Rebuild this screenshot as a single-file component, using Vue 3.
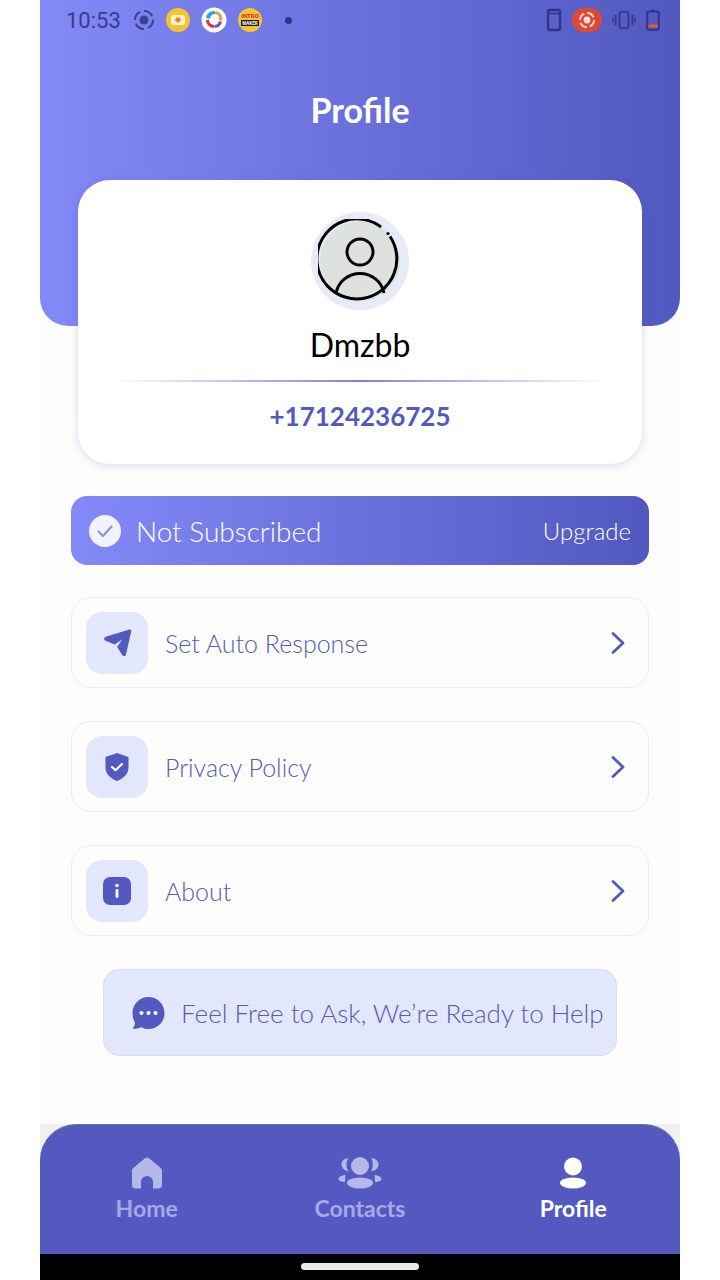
<template>
  <div class="phone">
    <header class="hero">
      <div class="status-bar">
        <span class="clock">10:53</span>
        <svg class="st-icon" width="22" height="22" viewBox="0 0 22 22">
          <circle cx="11" cy="11" r="9" fill="none" stroke="#3a4190" stroke-width="2" stroke-dasharray="10 4" />
          <circle cx="11" cy="11" r="4.5" fill="#3a4190" />
        </svg>
        <svg class="st-icon" width="26" height="26" viewBox="0 0 26 26">
          <circle cx="13" cy="13" r="12" fill="#f6c52d" />
          <rect x="6" y="8" width="14" height="10" rx="2" fill="#fff4d0" />
          <path d="M11 10.5h4v2h2l-4 3.5-4-3.5h2z" fill="#e8862a" />
        </svg>
        <svg class="st-icon" width="26" height="26" viewBox="0 0 26 26">
          <circle cx="13" cy="13" r="12.5" fill="#fff" />
          <path d="M5 11a8 8 0 0 1 9-7l1 3a5 5 0 0 0-6 5z" fill="#2fa3d6" />
          <path d="M15 4a8 8 0 0 1 6 10l-3-1a5 5 0 0 0-3-6z" fill="#f09a36" />
          <path d="M21 15a8 8 0 0 1-7 6l-1-3a5 5 0 0 0 5-4z" fill="#7a55b8" />
          <path d="M5 13a8 8 0 0 0 8 8l0-3a5 5 0 0 1-5-5z" fill="#d8304f" />
        </svg>
        <svg class="st-icon" width="26" height="26" viewBox="0 0 26 26">
          <circle cx="13" cy="13" r="12" fill="#f6c52d" />
          <text x="13" y="11" text-anchor="middle" class="intro-top">INTRO</text>
          <rect x="4" y="13" width="18" height="6" fill="#1a1a1a" />
          <text x="13" y="18" text-anchor="middle" class="intro-bottom">MAKER</text>
        </svg>
        <span class="st-dot"></span>
        <span class="st-spacer"></span>
        <svg class="st-icon" width="16" height="24" viewBox="0 0 16 24">
          <rect x="2" y="2" width="12" height="20" rx="1.5" fill="none" stroke="#2f3685" stroke-width="2.4" />
          <path d="M2 5.5h12" stroke="#2f3685" stroke-width="1.6" />
        </svg>
        <svg class="st-icon" width="30" height="24" viewBox="0 0 30 24">
          <rect x="0" y="0" width="30" height="24" rx="12" fill="#e4472f" />
          <circle cx="15" cy="12" r="3.4" fill="#fbe4de" />
          <circle cx="15" cy="12" r="7" fill="none" stroke="#fbe4de" stroke-width="1.8" stroke-dasharray="8 3" />
        </svg>
        <svg class="st-icon" width="24" height="22" viewBox="0 0 24 22">
          <rect x="7.5" y="3" width="9" height="16" rx="1.5" fill="none" stroke="#363d8c" stroke-width="2" />
          <path d="M3.5 6v10M20.5 6v10" stroke="#363d8c" stroke-width="2" />
          <path d="M0.8 8.5v5M23.2 8.5v5" stroke="#363d8c" stroke-width="1.6" />
        </svg>
        <svg class="st-icon" width="14" height="22" viewBox="0 0 14 22">
          <path d="M5 0.5h4v2H5z" fill="#2f3685" />
          <rect x="1.2" y="2.6" width="11.6" height="18.2" rx="1.5" fill="none" stroke="#2f3685" stroke-width="2" />
          <rect x="2.4" y="15.5" width="9.2" height="3" fill="#e4572f" />
        </svg>
      </div>
      <h1 class="title">Profile</h1>
    </header>

    <main class="content">
      <section class="card">
        <div class="avatar">
          <svg width="84" height="84" viewBox="0 0 84 84">
            <circle cx="42" cy="42" r="40" fill="#dde2dd" />
            <path d="M72 17.5A40 40 0 1 1 63 8" fill="none" stroke="#000" stroke-width="3" />
            <circle cx="70" cy="14.5" r="1.6" fill="#000" />
            <circle cx="42" cy="33" r="13" fill="none" stroke="#000" stroke-width="3" />
            <path d="M18 74a24.500 24.500 0 0 1 48 0" fill="none" stroke="#000" stroke-width="3" />
          </svg>
        </div>
        <div class="name">Dmzbb</div>
        <div class="divider"></div>
        <div class="phone-no">+17124236725</div>
      </section>

      <section class="sub-banner">
        <span class="check">
          <svg width="18" height="14" viewBox="0 0 18 14">
            <path d="M2.500 7.500l4.500 4.500 8.500-9.500" fill="none" stroke="#8f94d8" stroke-width="2.200" stroke-linecap="round" stroke-linejoin="round" />
          </svg>
        </span>
        <span class="sub-label">Not Subscribed</span>
        <span class="upgrade">Upgrade</span>
      </section>

      <div class="menu">
        <div v-for="item in menuItems" :key="item.label" class="menu-row">
          <span class="tile">
            <svg width="30" height="30" viewBox="0 0 30 30">
              <template v-if="item.icon === 'send'">
                <path d="M27.500 1.500c1.200-.3 2 .5 1.700 1.700L24 26.500c-.4 1.700-2.600 2.100-3.600.7l-5.300-8.200 5-7.400-7.400 5L3 12.500C1.500 11.500 2 9.300 3.700 8.800z" fill="#5359c1" />
              </template>
              <template v-else-if="item.icon === 'shield'">
                <path d="M15 1l11.500 4v10.500c0 6.500-5 11-11.500 13.500C8.500 26.500 3.500 22 3.500 15.500V5z" fill="#5359c1" />
                <path d="M10 15l3.500 3.200L20 12" fill="none" stroke="#fff" stroke-width="2.200" stroke-linecap="round" stroke-linejoin="round" />
              </template>
              <template v-else>
                <rect x="1" y="1" width="28" height="28" rx="7" fill="#5359c1" />
                <circle cx="15" cy="9.500" r="1.700" fill="#fff" />
                <rect x="13.600" y="13" width="2.800" height="9" rx="1.400" fill="#fff" />
              </template>
            </svg>
          </span>
          <span class="menu-label">{{ item.label }}</span>
          <svg class="chevron" width="16" height="24" viewBox="0 0 16 24">
            <path d="M3 2.500L13 12 3 21.500" fill="none" stroke="#5359c1" stroke-width="2.800" stroke-linecap="round" stroke-linejoin="round" />
          </svg>
        </div>
      </div>

      <div class="help-box">
        <svg width="34" height="34" viewBox="0 0 34 34">
          <path d="M17.500 1C26.500 1 33.500 8 33.500 17S26.500 33 17.500 33c-2.800 0-5.200-.7-7.500-1.800C7.500 32.500 4.500 33 1.500 32.500 3.500 30.500 4 28.500 3.800 26 2.200 23.500 1.500 20.500 1.500 17 1.500 8 8.500 1 17.500 1z" fill="#5359c1" />
          <circle cx="10.500" cy="17" r="2" fill="#fff" />
          <circle cx="17.500" cy="17" r="2" fill="#fff" />
          <circle cx="24.500" cy="17" r="2" fill="#fff" />
        </svg>
        <span class="help-text">Feel Free to Ask, We’re Ready to Help</span>
      </div>
    </main>

    <div class="nav-wrap">
      <nav class="nav">
        <div v-for="tab in tabs" :key="tab.label" class="tab" :class="{ active: tab.active }">
          <svg width="44" height="32" viewBox="0 0 44 32">
            <path v-if="tab.icon === 'home'" fill-rule="evenodd" d="M20 1.200c1.200-1 2.800-1 4 0l11.500 9.600c.9.800 1.500 2 1.500 3.200V28c0 2-1.500 3.500-3.500 3.500H28V25a6 6 0 0 0-12 0v6.500h-5.500C8.500 31.500 7 30 7 28V14c0-1.200.6-2.400 1.500-3.200z" />
            <g v-else-if="tab.icon === 'group'">
              <circle cx="22" cy="9" r="9" />
              <ellipse cx="22" cy="26" rx="13" ry="5.500" />
              <path d="M10.500 1c-4 .3-7 3-7 6.500 0 3.500 3 6.500 7.500 6.800C8 12 7.500 5 10.500 1zM33.500 1c4 .3 7 3 7 6.500 0 3.500-3 6.500-7.500 6.800 2-2.300 2.500-9.300.5-13.300z" />
              <path d="M7.500 18c-3.500.3-7 2-7 4 0 1.800 3.500 3 6.500 3 0-2.700.5-5 .5-7zM36.500 18c3.500.3 7 2 7 4 0 1.800-3.500 3-6.500 3 0-2.700-.5-5-.5-7z" />
            </g>
            <g v-else>
              <circle cx="22" cy="9.500" r="9" />
              <ellipse cx="22" cy="26" rx="13" ry="5.500" />
            </g>
          </svg>
          <span class="tab-label">{{ tab.label }}</span>
        </div>
      </nav>
    </div>

    <div class="gesture-bar"><span class="handle"></span></div>
  </div>
</template>

<script setup>
const menuItems = [
  { label: 'Set Auto Response', icon: 'send' },
  { label: 'Privacy Policy', icon: 'shield' },
  { label: 'About', icon: 'info' }
];

const tabs = [
  { label: 'Home', icon: 'home', active: false },
  { label: 'Contacts', icon: 'group', active: false },
  { label: 'Profile', icon: 'person', active: true }
];
</script>

<style>
html, body {
  background: #fff;
}
</style>

<style scoped>
.phone {
  width: 640px;
  height: 1280px;
  margin: 0 auto;
  display: flex;
  flex-direction: column;
  background: #fdfefc;
  font-family: "Lato", "Noto Sans", sans-serif;
  overflow: hidden;
}

.hero {
  height: 326px;
  flex: none;
  background: linear-gradient(90deg, #8389f7 0%, #5158bf 100%);
  border-radius: 0 0 28px 28px;
}

.status-bar {
  height: 40px;
  display: flex;
  align-items: center;
  padding: 0 20px 0 26px;
  gap: 10px;
}

.clock {
  font-family: "Roboto", sans-serif;
  font-size: 22px;
  color: #363d8c;
  margin-right: 2px;
}

.st-icon {
  flex: none;
}

.intro-top {
  font: 700 6px "Roboto", sans-serif;
  fill: #d8263a;
}

.intro-bottom {
  font: 700 4.500px "Roboto", sans-serif;
  fill: #fff;
}

.st-dot {
  width: 7px;
  height: 7px;
  border-radius: 50%;
  background: #2f3685;
  margin-left: 12px;
}

.st-spacer {
  flex: 1;
}

.title {
  margin: 46px 0 0;
  text-align: center;
  font-size: 34px;
  font-weight: 700;
  line-height: 48px;
  color: #fff;
}

.content {
  flex: 1;
  display: flex;
  flex-direction: column;
  align-items: center;
}

.card {
  width: 564px;
  height: 284px;
  margin-top: -146px;
  display: flex;
  flex-direction: column;
  align-items: center;
  padding-top: 32px;
  box-sizing: border-box;
  background: #fff;
  border-radius: 32px;
  box-shadow: 0 2px 8px rgba(83, 89, 193, 0.22);
}

.avatar {
  width: 98px;
  height: 98px;
  flex: none;
  display: flex;
  align-items: center;
  justify-content: center;
  border-radius: 50%;
  background: #e7ebf6;
}

.name {
  margin-top: 15px;
  font-size: 32px;
  line-height: 40px;
  color: #000;
}

.divider {
  width: 490px;
  height: 2px;
  margin-top: 15px;
  background: linear-gradient(90deg, rgba(83, 89, 193, 0), #7d82d2 50%, rgba(83, 89, 193, 0));
}

.phone-no {
  margin-top: 17px;
  font-size: 26px;
  font-weight: 700;
  line-height: 34px;
  color: #5359c1;
}

.sub-banner {
  width: 578px;
  height: 69px;
  margin-top: 32px;
  padding: 0 18px;
  box-sizing: border-box;
  display: flex;
  align-items: center;
  background: linear-gradient(90deg, #8389f7 0%, #5158bf 100%);
  border-radius: 16px;
  color: #fff;
}

.check {
  width: 32px;
  height: 32px;
  display: flex;
  align-items: center;
  justify-content: center;
  border-radius: 50%;
  background: #f2f3fc;
}

.sub-label {
  flex: 1;
  margin-left: 15px;
  font-size: 28px;
  font-weight: 300;
}

.upgrade {
  font-size: 24px;
  font-weight: 300;
}

.menu {
  margin-top: 32px;
  display: flex;
  flex-direction: column;
  gap: 33px;
}

.menu-row {
  width: 578px;
  height: 91px;
  padding: 0 22px 0 14px;
  box-sizing: border-box;
  display: flex;
  align-items: center;
  background: #fdfefc;
  border: 1.500px solid #eceeec;
  border-radius: 20px;
}

.tile {
  width: 62px;
  height: 62px;
  flex: none;
  display: flex;
  align-items: center;
  justify-content: center;
  background: #e2e7fb;
  border-radius: 16px;
}

.menu-label {
  flex: 1;
  margin-left: 17px;
  font-size: 25px;
  font-weight: 300;
  color: #555bb5;
}

.help-box {
  width: 514px;
  height: 87px;
  margin-top: 33px;
  padding: 0 0 0 27px;
  box-sizing: border-box;
  display: flex;
  align-items: center;
  background: #e3e7fb;
  border: 1.500px solid #dadfe8;
  border-radius: 16px;
}

.help-text {
  margin-left: 16px;
  font-size: 26px;
  font-weight: 300;
  color: #555bb5;
}

.nav-wrap {
  height: 130px;
  flex: none;
  background: #eef1ec;
}

.nav {
  height: 100%;
  display: grid;
  grid-template-columns: repeat(3, 1fr);
  box-sizing: border-box;
  padding-top: 32px;
  background: #5359c1;
  border-top: 1px solid #6c6f9e;
  border-radius: 36px 36px 0 0;
}

.tab {
  display: flex;
  flex-direction: column;
  align-items: center;
  color: #a6a9e6;
  fill: #b6b9e8;
}

.tab.active {
  color: #fff;
  fill: #fff;
}

.tab-label {
  margin-top: 2px;
  font-size: 23px;
  font-weight: 700;
  line-height: 34px;
}

.gesture-bar {
  height: 26px;
  flex: none;
  display: flex;
  justify-content: center;
  padding-top: 9px;
  box-sizing: border-box;
  background: #000;
}

.handle {
  width: 118px;
  height: 7px;
  border-radius: 4px;
  background: #e8eae6;
}
</style>
